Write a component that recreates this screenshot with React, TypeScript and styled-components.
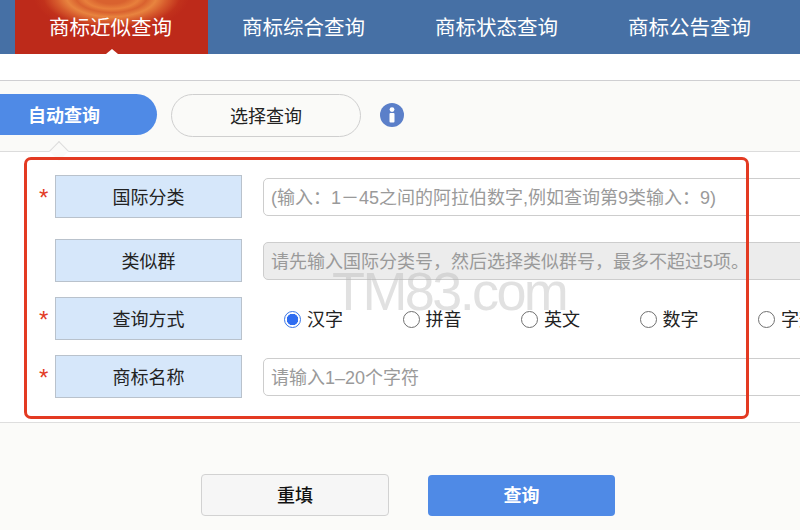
import React from "react";
import styled, { createGlobalStyle } from "styled-components";

const Global = createGlobalStyle`
  html, body { margin: 0; padding: 0; background: #fff; }
  * { box-sizing: border-box; }
  body { font-family: "Liberation Sans", "Noto Sans CJK SC", sans-serif; }
`;

const Page = styled.div`
  position: relative;
  width: 800px;
  height: 530px;
  overflow: hidden;
  background: #fbfbf9;
`;

const Nav = styled.nav`
  display: flex;
  height: 54px;
  padding-left: 15px;
  background: #4670a5;
`;

const Tab = styled.div<{ $active?: boolean }>`
  position: relative;
  flex: 0 0 193px;
  display: flex;
  align-items: center;
  justify-content: center;
  padding: 0 2px 2px 0;
  color: #fff;
  font-size: 20.5px;
  white-space: nowrap;
  background: ${(p) =>
    p.$active
      ? `radial-gradient(ellipse 78px 36px at 50% -4px, #d9622f 0 22%, #e8803c 36%, #d9622f 46%, #e8843f 58%, #d65a2c 72%, rgba(200, 60, 30, 0.4) 88%, transparent 100%), #bd2a1a`
      : "transparent"};
  ${(p) =>
    p.$active &&
    `&::after {
      content: "";
      position: absolute;
      left: 50%;
      bottom: 0;
      margin-left: -6px;
      border-left: 6px solid transparent;
      border-right: 6px solid transparent;
      border-bottom: 5px solid #fff;
    }`}
`;

const Spacer = styled.div`
  height: 26px;
  background: #fff;
`;

const Toolbar = styled.div`
  position: relative;
  display: flex;
  align-items: flex-start;
  height: 72px;
  padding-top: 13px;
  background: #fafaf8;
  border-top: 1px solid #cfcfd2;
  border-bottom: 1px solid #dcdcdc;
  &::after {
    content: "";
    position: absolute;
    left: 52px;
    bottom: -7px;
    width: 13px;
    height: 13px;
    background: #fafaf8;
    border-top: 1px solid #dcdcdc;
    border-left: 1px solid #dcdcdc;
    transform: rotate(45deg);
  }
`;

const ModeActive = styled.div`
  width: 157px;
  height: 41px;
  margin-right: 14px;
  padding: 0 0 2px 28px;
  display: flex;
  align-items: center;
  border-radius: 0 21px 21px 0;
  background: #4f8ae6;
  color: #fff;
  font-size: 18px;
  font-weight: 700;
`;

const ModeIdle = styled.div`
  width: 190px;
  height: 43px;
  padding-bottom: 2px;
  display: flex;
  align-items: center;
  justify-content: center;
  border-radius: 22px;
  border: 1.5px solid #cfcfcf;
  color: #222;
  font-size: 18px;
`;

const InfoWrap = styled.div`
  display: flex;
  margin: 8px 0 0 18px;
`;

const Form = styled.section`
  padding-top: 23px;
  height: 271px;
  background: #fff;
  border-bottom: 1px solid #dedede;
`;

const Row = styled.div<{ $gap: number }>`
  display: flex;
  align-items: center;
  height: 43px;
  margin-bottom: ${(p) => p.$gap}px;
`;

const Star = styled.span`
  flex: 0 0 55px;
  padding: 3px 0 0 39px;
  color: #e23b26;
  font-size: 24px;
  line-height: 1;
`;

const Label = styled.div`
  flex: 0 0 187px;
  height: 43px;
  margin-right: 21px;
  padding-bottom: 2px;
  display: flex;
  align-items: center;
  justify-content: center;
  background: #d6e7fa;
  border: 1px solid #b9c2cc;
  color: #222;
  font-size: 18px;
`;

const Field = styled.input`
  flex: 0 0 620px;
  height: 38px;
  padding: 3px 7px 0;
  border: 1.5px solid #cdcdcd;
  border-radius: 5px;
  background: #fff;
  font: inherit;
  font-size: 18px;
  outline: none;
  &::placeholder {
    color: #9a9a9a;
    opacity: 1;
  }
  &:disabled {
    background: #ececec;
  }
`;

const RadioGroup = styled.div`
  display: flex;
  padding-left: 21px;
`;

const RadioItem = styled.label`
  flex: 0 0 118.5px;
  display: flex;
  align-items: center;
  gap: 6px;
  padding-bottom: 2px;
  color: #222;
  font-size: 18px;
  white-space: nowrap;
`;

const RadioDot = styled.input`
  appearance: none;
  width: 17px;
  height: 17px;
  margin: 4px 0 0;
  border-radius: 50%;
  background: #fff;
  border: 1px solid #707070;
  &:checked {
    border-color: #3a76e6;
    background: radial-gradient(circle, #2f6df0 0 5.5px, #fff 6px);
  }
`;

const Actions = styled.div`
  display: flex;
  padding: 51px 0 0 201px;
  gap: 39px;
`;

const ResetButton = styled.button`
  width: 188px;
  height: 42px;
  padding: 0 0 3px;
  border: 1.5px solid #d2d2d2;
  border-radius: 4px;
  background: #f6f6f6;
  color: #111;
  font: inherit;
  font-size: 18px;
  font-weight: 500;
`;

const SearchButton = styled.button`
  width: 187px;
  height: 41px;
  margin-top: 1px;
  padding: 0 0 3px;
  border: none;
  border-radius: 4px;
  background: #4f8ae6;
  color: #fff;
  font: inherit;
  font-size: 18px;
  font-weight: 700;
`;

const Highlight = styled.div`
  position: absolute;
  left: 24px;
  top: 157px;
  width: 725px;
  height: 262px;
  border: 3px solid #e33a22;
  border-radius: 7px;
  pointer-events: none;
`;

const Watermark = styled.div`
  position: absolute;
  left: 332px;
  top: 258px;
  color: rgba(180, 180, 180, 0.4);
  font-family: "Liberation Sans", sans-serif;
  font-size: 54px;
  line-height: 66px;
  letter-spacing: -2.6px;
  pointer-events: none;
`;

const InfoIcon = () => (
  <svg width="26" height="26" viewBox="0 0 26 26" aria-hidden="true">
    <circle cx="13" cy="13" r="12" fill="#5b7fc9" />
    <circle cx="13" cy="7.6" r="2.4" fill="#fff" />
    <rect x="10.5" y="11" width="5" height="9.5" rx="1" fill="#fff" />
  </svg>
);

const tabs = ["商标近似查询", "商标综合查询", "商标状态查询", "商标公告查询"];
const methods = ["汉字", "拼音", "英文", "数字", "字形"];

export default function App() {
  return (
    <Page>
      <Global />
      <Nav>
        {tabs.map((t, i) => (
          <Tab key={t} $active={i === 0}>
            {t}
          </Tab>
        ))}
      </Nav>
      <Spacer />
      <Toolbar>
        <ModeActive>自动查询</ModeActive>
        <ModeIdle>选择查询</ModeIdle>
        <InfoWrap>
          <InfoIcon />
        </InfoWrap>
      </Toolbar>
      <Form>
        <Row $gap={21}>
          <Star>*</Star>
          <Label>国际分类</Label>
          <Field placeholder="(输入：1－45之间的阿拉伯数字,例如查询第9类输入：9)" />
        </Row>
        <Row $gap={15}>
          <Star />
          <Label>类似群</Label>
          <Field disabled placeholder="请先输入国际分类号，然后选择类似群号，最多不超过5项。" />
        </Row>
        <Row $gap={15}>
          <Star>*</Star>
          <Label>查询方式</Label>
          <RadioGroup>
            {methods.map((m, i) => (
              <RadioItem key={m}>
                <RadioDot type="radio" name="method" defaultChecked={i === 0} />
                {m}
              </RadioItem>
            ))}
          </RadioGroup>
        </Row>
        <Row $gap={0}>
          <Star>*</Star>
          <Label>商标名称</Label>
          <Field placeholder="请输入1–20个字符" />
        </Row>
      </Form>
      <Actions>
        <ResetButton>重填</ResetButton>
        <SearchButton>查询</SearchButton>
      </Actions>
      <Watermark>TM83.com</Watermark>
      <Highlight />
    </Page>
  );
}
